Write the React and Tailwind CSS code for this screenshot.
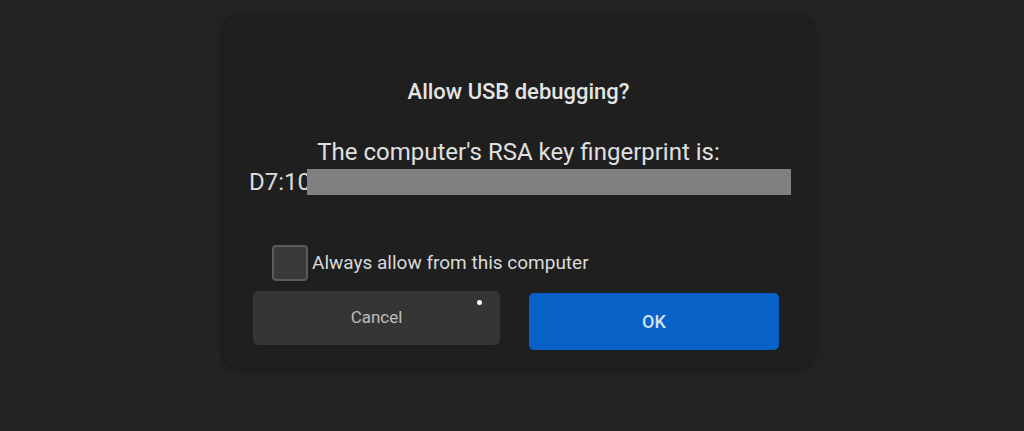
import React from 'react';

const font = { fontFamily: 'Roboto, "Noto Sans", sans-serif' };

const UsbDebugDialog = () => {
  return (
    <div className="relative flex flex-col w-[593px] h-[355px] ml-[222px] mt-[15px] rounded-[16px] bg-[#1f1f1f] border border-[#1b1b1b] shadow-[0_0_4px_rgba(0,0,0,0.3)] text-[#e2e2e2]">
      <h1 className="mt-[64px] text-center text-[22px] leading-[24px] font-medium text-[#e4e4e4]">
        Allow USB debugging?
      </h1>

      <p className="mt-[34px] text-center text-[24px] leading-[28px] text-[#e0e0e0]">
        The computer's RSA key fingerprint is:
      </p>
      <div className="flex items-center h-[26px] mt-[3px] pl-[26px]">
        <span className="shrink-0 w-[58px] text-[24px] leading-[26px] text-[#dcdcdc] whitespace-nowrap">D7:10</span>
        {/* redacted fingerprint, lies over the end of the text */}
        <div className="relative shrink-0 w-[484px] h-[26px] bg-[#808080]" />
      </div>

      <label className="flex items-center gap-[4px] mt-[50px] ml-[49px] h-[36px]">
        <span className="w-[36px] h-[36px] rounded-[4px] border-2 border-[#5a5a5a] bg-[#393939]" />
        <span className="text-[19px] leading-[22px] text-[#dadada]">Always allow from this computer</span>
      </label>

      <div className="flex items-start mt-[10px] ml-[30px] gap-[29px]">
        <button className="relative w-[247px] h-[54px] rounded-[5px] bg-[#353535] text-[17px] text-[#bdbdbd]">
          Cancel
          <span className="absolute left-[224px] top-[9px] w-[5px] h-[5px] rounded-full bg-white" />
        </button>
        <button className="w-[250px] h-[57px] mt-[2px] rounded-[5px] bg-[#0861c6] text-[18px] font-medium text-[#d4e2f5]">
          OK
        </button>
      </div>
    </div>
  );
};

export default function App() {
  return (
    <div className="w-[1024px] h-[431px] overflow-hidden bg-[#232323] flex flex-col" style={font}>
      <UsbDebugDialog />
    </div>
  );
}
